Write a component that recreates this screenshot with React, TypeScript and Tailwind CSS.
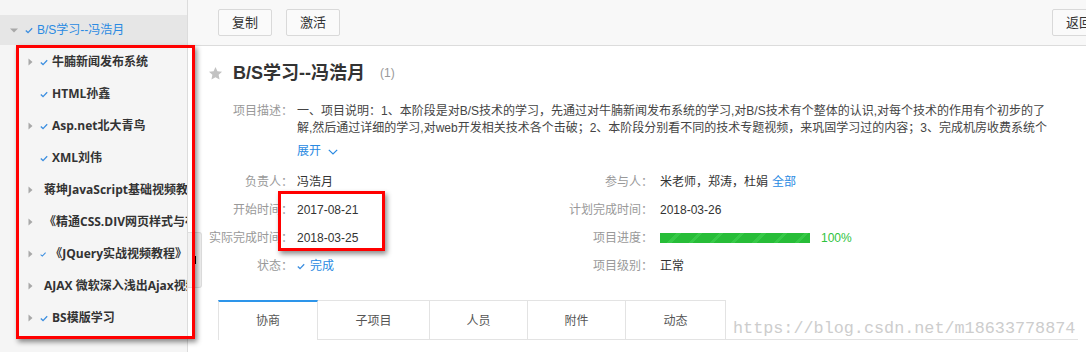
import React from "react";

const Check = ({ className = "" }: { className?: string }) => (
  <svg width="8" height="7" viewBox="0 0 8 7" className={className}>
    <path d="M0.8 3.6 L3 5.6 L7.2 1.2" fill="none" stroke="#3d8fe0" strokeWidth="1.3" />
  </svg>
);

const CaretRight = () => (
  <svg width="5" height="8" viewBox="0 0 5 8">
    <path d="M0.5 0.5 L4.5 4 L0.5 7.5 Z" fill="#a8a8a8" />
  </svg>
);

const CaretDown = () => (
  <svg width="8" height="5" viewBox="0 0 8 5">
    <path d="M0 0.5 L8 0.5 L4 4.5 Z" fill="#a8a8a8" />
  </svg>
);

const items: { text: string; caret: boolean }[] = [
  { text: "牛腩新闻发布系统", caret: true },
  { text: "HTML孙鑫", caret: false },
  { text: "Asp.net北大青鸟", caret: true },
  { text: "XML刘伟", caret: false },
  { text: "蒋坤JavaScript基础视频教程", caret: true },
  { text: "《精通CSS.DIV网页样式与布局》", caret: true },
  { text: "《JQuery实战视频教程》", caret: true },
  { text: "AJAX 微软深入浅出Ajax视频", caret: true },
  { text: "BS模版学习", caret: true },
];

function Sidebar() {
  return (
    <div className="w-[188px] shrink-0 h-full bg-[#f5f5f5] border-r border-[#dcdcdc] pt-[15px] overflow-hidden">
      <div className="h-[30px] bg-[#e6e6e6] flex items-center pl-[10px]">
        <CaretDown />
        <Check className="ml-[7px]" />
        <span className="ml-[4px] text-[12px] text-[#2a8ae2] whitespace-nowrap">B/S学习--冯浩月</span>
      </div>
      <div className="mt-[1px]">
        {items.map((it) => (
          <div key={it.text} className="h-[32px] flex items-center pl-[28px] whitespace-nowrap">
            <div className="w-[5px] flex items-center">{it.caret ? <CaretRight /> : null}</div>
            <Check className="ml-[7px]" />
            <span className="ml-[4px] text-[12px] font-bold text-[#333] font-['Open_Sans','Noto_Sans_CJK_SC',sans-serif]">
              {it.text}
            </span>
          </div>
        ))}
      </div>
    </div>
  );
}

function Btn({ children, className = "" }: { children: React.ReactNode; className?: string }) {
  return (
    <div
      className={`h-[27px] w-[54px] shrink-0 border border-[#d9d9d9] rounded-[2px] bg-[#fafafa] flex items-center justify-center text-[13px] text-[#333] ${className}`}
    >
      {children}
    </div>
  );
}

function Row({
  l1,
  v1,
  l2,
  v2,
}: {
  l1: string;
  v1: React.ReactNode;
  l2: string;
  v2: React.ReactNode;
}) {
  return (
    <div className="h-[28px] flex items-center text-[12px]">
      <div className="w-[372px] flex items-center">
        <div className="w-[105px] text-right text-[#999]">{l1}</div>
        <div className="ml-[4px] text-[#333]">{v1}</div>
      </div>
      <div className="flex items-center">
        <div className="w-[93px] text-right text-[#999]">{l2}</div>
        <div className="ml-[7px] text-[#333] flex items-center">{v2}</div>
      </div>
    </div>
  );
}

const tabs = [
  { t: "协商", w: "w-[100px]" },
  { t: "子项目", w: "w-[112px]" },
  { t: "人员", w: "w-[98px]" },
  { t: "附件", w: "w-[98px]" },
  { t: "动态", w: "w-[100px]" },
];

export default function App() {
  return (
    <div className="relative w-[1086px] h-[352px] overflow-hidden bg-white flex font-['Liberation_Sans','Noto_Sans_CJK_SC',sans-serif]">
      <Sidebar />
      <div className="flex-1 min-w-0 flex flex-col">
        <div className="h-[46px] shrink-0 bg-[#f8f8f8] border-b border-[#dcdcdc] flex items-center pl-[30px] gap-[14px]">
          <Btn>复制</Btn>
          <Btn>激活</Btn>
          <Btn className="ml-auto -mr-[20px]">返回</Btn>
        </div>

        <div className="mt-[15px] h-[24px] flex items-center pl-[20px]">
          <svg width="15" height="15" viewBox="0 0 24 24">
            <path
              d="M12 1.5 L15.1 8.3 L22.5 9.1 L17 14.1 L18.5 21.5 L12 17.8 L5.5 21.5 L7 14.1 L1.5 9.1 L8.9 8.3 Z"
              fill="#c2c2c2"
            />
          </svg>
          <span className="ml-[10px] text-[18px] font-bold text-[#333] whitespace-nowrap">B/S学习--冯浩月</span>
          <span className="ml-[15px] text-[12px] text-[#999]">(1)</span>
        </div>

        <div className="mt-[18px] flex text-[12px] leading-[17px]">
          <div className="w-[105px] shrink-0 text-right text-[#999]">项目描述：</div>
          <div className="ml-[4px] text-[#444]">
            <div className="whitespace-nowrap">
              一、项目说明：1、本阶段是对B/S技术的学习，先通过对牛腩新闻发布系统的学习,对B/S技术有个整体的认识,对每个技术的作用有个初步的了
            </div>
            <div className="whitespace-nowrap">
              解,然后通过详细的学习,对web开发相关技术各个击破；2、本阶段分别看不同的技术专题视频，来巩固学习过的内容；3、完成机房收费系统个
            </div>
            <div className="mt-[6px] flex items-center text-[#2a8ae2]">
              <span>展开</span>
              <svg width="10" height="6" viewBox="0 0 10 6" className="ml-[7px]">
                <path d="M0.8 0.8 L5 5 L9.2 0.8" fill="none" stroke="#2a8ae2" strokeWidth="1.2" />
              </svg>
            </div>
          </div>
        </div>

        <div className="mt-[8px]">
          <Row
            l1="负责人："
            v1="冯浩月"
            l2="参与人："
            v2={
              <>
                <span>米老师，郑涛，杜娟</span>
                <span className="ml-[4px] text-[#2a8ae2]">全部</span>
              </>
            }
          />
          <Row l1="开始时间：" v1="2017-08-21" l2="计划完成时间：" v2="2018-03-26" />
          <Row
            l1="实际完成时间："
            v1="2018-03-25"
            l2="项目进度："
            v2={
              <>
                <div className="w-[150px] h-[10px] bg-[repeating-linear-gradient(135deg,#27bd38_0px,#27bd38_12px,#36c947_12px,#36c947_15px)]" />
                <span className="ml-[11px] text-[#2fc33e]">100%</span>
              </>
            }
          />
          <Row
            l1="状态："
            v1={
              <span className="flex items-center text-[#2a8ae2]">
                <Check />
                <span className="ml-[5px]">完成</span>
              </span>
            }
            l2="项目级别："
            v2="正常"
          />
        </div>

        <div className="mt-[20px] ml-[30px] w-[860px] h-[40px] flex border-b border-[#e3e3e3]">
          {tabs.map((tab, i) => (
            <div
              key={tab.t}
              className={`${tab.w} h-[40px] flex items-center justify-center text-[12px] text-[#555] border-r border-[#e3e3e3] ${
                i === 0
                  ? "border-l border-t-2 border-t-[#2d95ea] bg-white h-[40px] -mb-[1px]"
                  : "border-t border-t-[#e3e3e3]"
              }`}
            >
              {tab.t}
            </div>
          ))}
        </div>
      </div>

      {/* collapse handle */}
      <div className="absolute left-[188px] top-[232px] w-[14px] h-[56px] bg-[#f2f2f2] border border-l-0 border-[#dedede] rounded-r-[3px]">
        <div className="absolute left-[6px] top-[23px] w-[2px] h-[8px] bg-black" />
      </div>

      {/* watermark */}
      <div className="absolute left-[733px] top-[318px] text-[16.8px] leading-[22px] text-[#cdcdcd] font-['Liberation_Mono',monospace] whitespace-nowrap">
        https://blog.csdn.net/m18633778874
      </div>

      {/* annotation boxes */}
      <div className="absolute left-[16px] top-[45px] w-[179px] h-[294px] border-[3px] border-[#ff0000] shadow-[2px_3px_5px_rgba(0,0,0,0.45)]" />
      <div className="absolute left-[278px] top-[191px] w-[107px] h-[60px] border-[3px] border-[#ff0000] shadow-[2px_3px_5px_rgba(0,0,0,0.45)]" />
    </div>
  );
}
